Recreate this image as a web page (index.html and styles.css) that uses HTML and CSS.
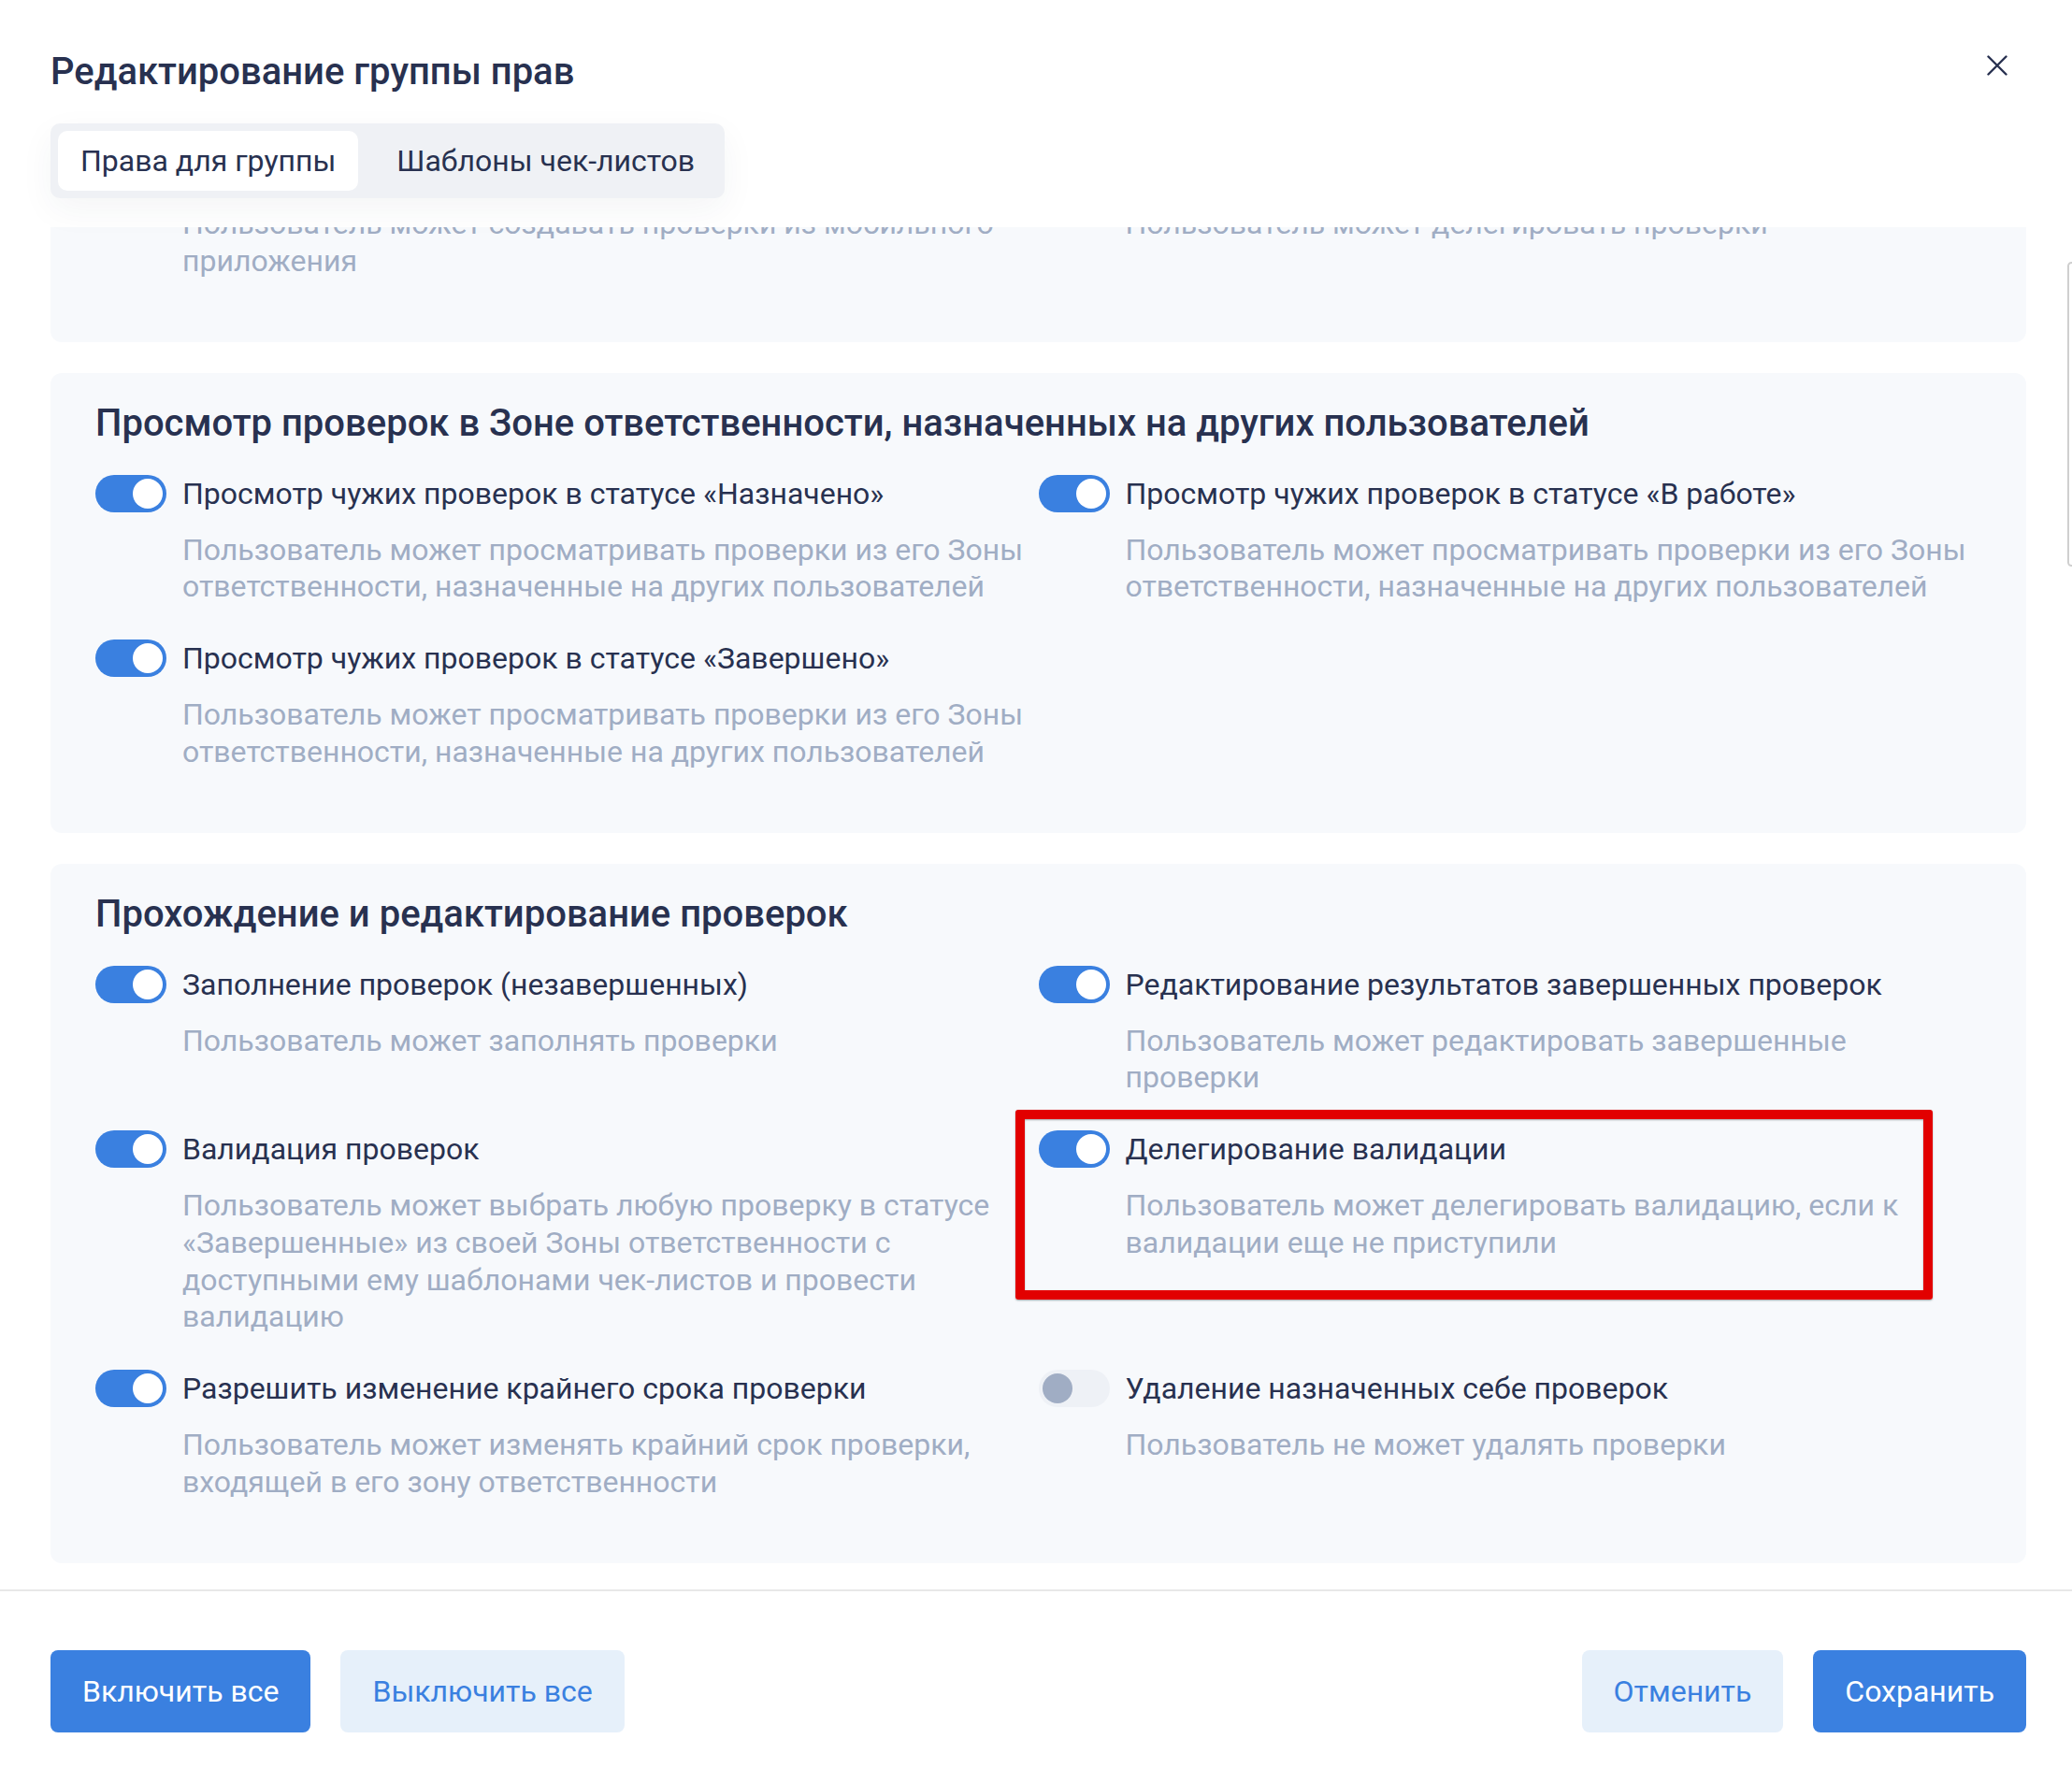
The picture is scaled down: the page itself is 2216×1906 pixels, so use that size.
FILE: index.html
```html
<!DOCTYPE html>
<html lang="ru">
<head>
<meta charset="utf-8">
<title>Редактирование группы прав</title>
<link rel="stylesheet" href="styles.css">
</head>
<body>
<div class="modal">
  <header class="modal-header">
    <div class="title-row">
      <h1 class="modal-title">Редактирование группы прав</h1>
      <button class="close" aria-label="Закрыть">
        <svg viewBox="0 0 22 22" width="22" height="22"><path d="M1.5 1.5 L20.5 20.5 M20.5 1.5 L1.5 20.5" stroke="#283150" stroke-width="2.4" stroke-linecap="round" fill="none"/></svg>
      </button>
    </div>
    <div class="tabs">
      <div class="tab active">Права для группы</div>
      <div class="tab">Шаблоны чек-листов</div>
    </div>
  </header>

  <main class="modal-body">
    <div class="body-inner">
      <section class="card">
        <h2 class="card-title">Создание проверок</h2>
        <div class="grid">
          <div class="perm">
            <div class="perm-head"><span class="toggle"><span class="knob"></span></span><span class="label">Создание проверок в мобильном приложении</span></div>
            <p class="desc">Пользователь может создавать проверки из мобильного приложения</p>
          </div>
          <div class="perm">
            <div class="perm-head"><span class="toggle"><span class="knob"></span></span><span class="label">Делегирование проверок</span></div>
            <p class="desc">Пользователь может делегировать проверки</p>
          </div>
        </div>
      </section>

      <section class="card">
        <h2 class="card-title">Просмотр проверок в Зоне ответственности, назначенных на других пользователей</h2>
        <div class="grid">
          <div class="perm">
            <div class="perm-head"><span class="toggle"><span class="knob"></span></span><span class="label">Просмотр чужих проверок в статусе «Назначено»</span></div>
            <p class="desc">Пользователь может просматривать проверки из его Зоны ответственности, назначенные на других пользователей</p>
          </div>
          <div class="perm">
            <div class="perm-head"><span class="toggle"><span class="knob"></span></span><span class="label">Просмотр чужих проверок в статусе «В работе»</span></div>
            <p class="desc">Пользователь может просматривать проверки из его Зоны ответственности, назначенные на других пользователей</p>
          </div>
          <div class="perm">
            <div class="perm-head"><span class="toggle"><span class="knob"></span></span><span class="label">Просмотр чужих проверок в статусе «Завершено»</span></div>
            <p class="desc">Пользователь может просматривать проверки из его Зоны ответственности, назначенные на других пользователей</p>
          </div>
        </div>
      </section>

      <section class="card">
        <h2 class="card-title">Прохождение и редактирование проверок</h2>
        <div class="grid">
          <div class="perm">
            <div class="perm-head"><span class="toggle"><span class="knob"></span></span><span class="label">Заполнение проверок (незавершенных)</span></div>
            <p class="desc">Пользователь может заполнять проверки</p>
          </div>
          <div class="perm">
            <div class="perm-head"><span class="toggle"><span class="knob"></span></span><span class="label">Редактирование результатов завершенных проверок</span></div>
            <p class="desc">Пользователь может редактировать завершенные проверки</p>
          </div>
          <div class="perm">
            <div class="perm-head"><span class="toggle"><span class="knob"></span></span><span class="label">Валидация проверок</span></div>
            <p class="desc">Пользователь может выбрать любую проверку в статусе «Завершенные» из своей Зоны ответственности с доступными ему шаблонами чек-листов и провести валидацию</p>
          </div>
          <div class="perm">
            <div class="perm-head"><span class="toggle"><span class="knob"></span></span><span class="label">Делегирование валидации</span></div>
            <p class="desc">Пользователь может делегировать валидацию, если к валидации еще не приступили</p>
            <div class="annot"></div>
          </div>
          <div class="perm">
            <div class="perm-head"><span class="toggle"><span class="knob"></span></span><span class="label">Разрешить изменение крайнего срока проверки</span></div>
            <p class="desc">Пользователь может изменять крайний срок проверки, входящей в его зону ответственности</p>
          </div>
          <div class="perm">
            <div class="perm-head"><span class="toggle off"><span class="knob"></span></span><span class="label">Удаление назначенных себе проверок</span></div>
            <p class="desc">Пользователь не может удалять проверки</p>
          </div>
        </div>
      </section>
    </div>
  </main>

  <footer class="modal-footer">
    <div class="btn-group">
      <button class="btn btn-primary">Включить все</button>
      <button class="btn btn-light">Выключить все</button>
    </div>
    <div class="btn-group">
      <button class="btn btn-light">Отменить</button>
      <button class="btn btn-primary">Сохранить</button>
    </div>
  </footer>

  <div class="page-scroll"></div>
</div>
<script src="script.js"></script>
</body>
</html>
```

FILE: styles.css
```css
* { box-sizing: border-box; }
html, body { margin: 0; padding: 0; }
body {
  font-family: Roboto, "Noto Sans", "Liberation Sans", sans-serif;
  color: #283150;
  background: #fff;
}
.modal {
  position: relative;
  height: 1906px;
  display: flex;
  flex-direction: column;
  overflow: hidden;
  background: #fff;
}
.modal-header {
  position: relative;
  z-index: 2;
  background: #fff;
  padding: 53px 69px 31px 54px;
}
.title-row {
  display: flex;
  justify-content: space-between;
  align-items: flex-start;
}
.modal-title {
  margin: 0;
  font-size: 40px;
  line-height: 48px;
  font-weight: 500;
  color: #283150;
}
.close {
  width: 22px;
  height: 22px;
  margin-top: 6px;
  padding: 0;
  border: 0;
  background: none;
  display: block;
}
.close svg { display: block; }
.tabs {
  margin-top: 31px;
  display: inline-flex;
  gap: 17px;
  padding: 8px;
  background: #eff1f5;
  border-radius: 10px;
  box-shadow: 0 12px 36px rgba(40, 50, 80, 0.05);
}
.tab {
  height: 64px;
  padding: 0 24px;
  display: flex;
  align-items: center;
  font-size: 32px;
  color: #283150;
  border-radius: 10px;
}
.tab.active { background: #fff; }

.modal-body {
  flex: 1;
  min-height: 0;
  overflow-y: auto;
  scrollbar-width: none;
  padding: 0 49px 0 54px;
}
.modal-body::-webkit-scrollbar { display: none; }
.body-inner { padding-bottom: 28px; }

.card {
  background: #f7f9fc;
  border-radius: 12px;
  padding: 30px 48px;
}
.card + .card { margin-top: 33px; }
.card-title {
  margin: 0 0 31px;
  font-size: 40px;
  line-height: 48px;
  font-weight: 500;
  color: #283150;
}
.grid {
  display: grid;
  grid-template-columns: 1fr 1fr;
  align-items: start;
}
.perm {
  position: relative;
  padding-bottom: 36.4px;
}
.perm-head {
  display: flex;
  align-items: center;
  gap: 17px;
  height: 40px;
  font-size: 32px;
  line-height: 40px;
  color: #283150;
  white-space: nowrap;
}
.desc {
  margin: 21px 0 0 93px;
  font-size: 32px;
  line-height: 39.6px;
  color: #a0adc4;
}
.toggle {
  flex: none;
  width: 76px;
  height: 40px;
  border-radius: 20px;
  background: #3a80e0;
  padding: 4px;
  display: flex;
  justify-content: flex-end;
}
.knob {
  width: 32px;
  height: 32px;
  border-radius: 50%;
  background: #fff;
}
.toggle.off {
  background: #eef1f6;
  justify-content: flex-start;
}
.toggle.off .knob { background: #a0adc4; }

.annot {
  position: absolute;
  left: -25px;
  top: -22px;
  width: 981px;
  height: 203px;
  border: 10px solid #e20000;
  border-radius: 3px;
  box-shadow: 0 1px 2px rgba(0, 0, 0, 0.35), inset 0 1px 2px rgba(0, 0, 0, 0.35);
  pointer-events: none;
}

.modal-footer {
  border-top: 2px solid #e8e8e8;
  padding: 63px 49px 53px 54px;
  display: flex;
  justify-content: space-between;
}
.btn-group { display: flex; gap: 32px; }
.btn {
  height: 88px;
  padding: 0 34px;
  border: 0;
  border-radius: 8px;
  font-family: Roboto, "Noto Sans", "Liberation Sans", sans-serif;
  font-size: 32px;
  cursor: pointer;
}
.btn-primary { background: #3a80e0; color: #fff; }
.btn-light { background: #e6f0fa; color: #3a80e0; }

.page-scroll {
  position: absolute;
  top: 280px;
  right: -4px;
  width: 9px;
  height: 326px;
  border: 2px solid #cfcfcf;
  border-radius: 5px;
  background: #fff;
}
```

FILE: script.js
```js
var body = document.querySelector('.modal-body');
body.scrollTop = body.scrollHeight;
```
